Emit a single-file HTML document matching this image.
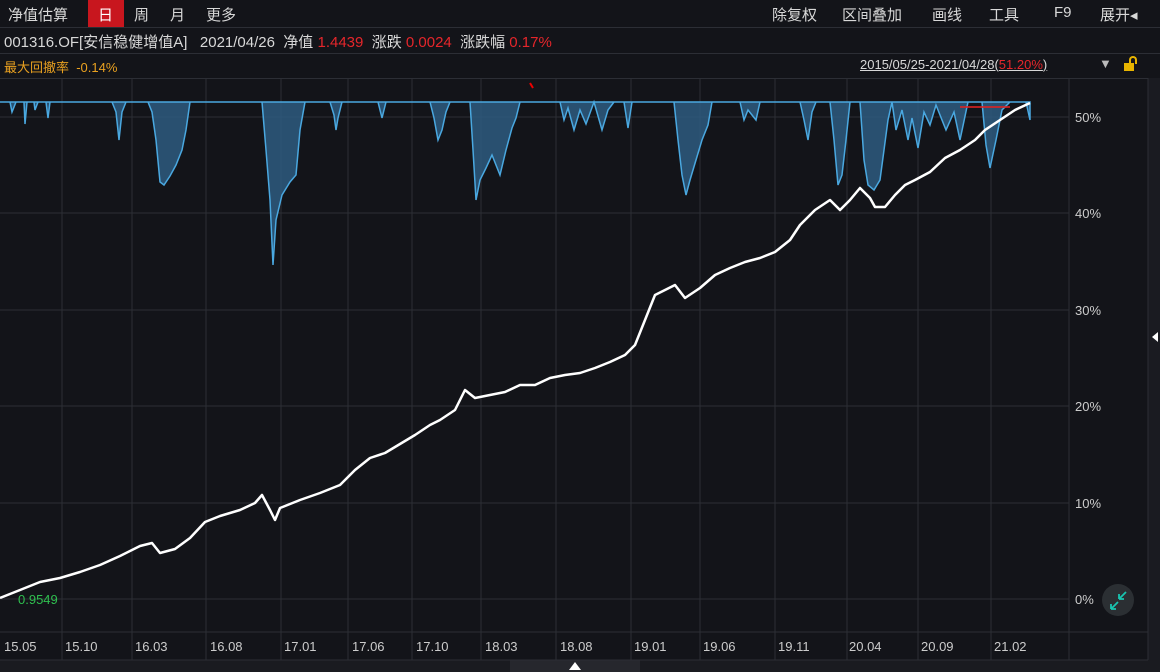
<!DOCTYPE html>
<html><head><meta charset="utf-8"><style>
*{margin:0;padding:0;box-sizing:border-box}
body{width:1160px;height:672px;background:#131419;overflow:hidden;position:relative;font-family:"Liberation Sans","Noto Sans CJK SC",sans-serif;color:#d8d8d8}
.t{position:absolute;white-space:nowrap;font-size:15px}
.r{color:#e5262b}
.line{position:absolute;background:#2c2e35}
</style></head><body>
<div class="line" style="left:0;top:27px;width:1160px;height:1px"></div>
<div class="line" style="left:0;top:53px;width:1160px;height:1px"></div>
<div class="line" style="left:0;top:78px;width:1160px;height:1px"></div>
<div style="position:absolute;left:88px;top:0;width:36px;height:27px;background:#c8161e"></div>
<div class="t" style="left:8px;top:4px">净值估算</div>
<div class="t" style="left:98px;top:4px;color:#fff">日</div>
<div class="t" style="left:134px;top:4px">周</div>
<div class="t" style="left:170px;top:4px">月</div>
<div class="t" style="left:206px;top:4px">更多</div>
<div class="t" style="left:772px;top:4px">除复权</div>
<div class="t" style="left:842px;top:4px">区间叠加</div>
<div class="t" style="left:932px;top:4px">画线</div>
<div class="t" style="left:989px;top:4px">工具</div>
<div class="t" style="left:1054px;top:4px">F9</div>
<div class="t" style="left:1100px;top:4px">展开◂</div>
<div class="t" style="left:4px;top:31px">001316.OF[安信稳健增值A]&nbsp;&nbsp; 2021/04/26 &nbsp;净值 <span class="r">1.4439</span> &nbsp;涨跌 <span class="r">0.0024</span> &nbsp;涨跌幅 <span class="r">0.17%</span></div>
<div class="t" style="left:4px;top:57px;font-size:13px;color:#e8a020">最大回撤率 &nbsp;-0.14%</div>
<div class="t" style="left:860px;top:57px;font-size:13px;text-decoration:underline">2015/05/25-2021/04/28(<span class="r">51.20%</span>)</div>
<div class="t" style="left:1099px;top:56px;font-size:13px;color:#bbb">▼</div>
<div style="position:absolute;left:1124px;top:63px;width:10px;height:8px;background:#e8b400"></div>
<div style="position:absolute;left:1129px;top:56px;width:8px;height:8px;border:2px solid #e8b400;border-bottom:none;border-radius:4px 4px 0 0"></div>
<svg style="position:absolute;left:0;top:0" width="1160" height="672">
<rect x="1148" y="78" width="12" height="594" fill="#1a1b21"/>
<rect x="0" y="660" width="1160" height="12" fill="#1a1b20"/>
<rect x="510" y="660" width="130" height="12" fill="#26272d"/>
<polygon points="569,670 575,662 581,670" fill="#fff"/>
<g stroke="#2c2e35" stroke-width="1">
<line x1="0" y1="117" x2="1069" y2="117"/><line x1="0" y1="213" x2="1069" y2="213"/><line x1="0" y1="310" x2="1069" y2="310"/><line x1="0" y1="406" x2="1069" y2="406"/><line x1="0" y1="503" x2="1069" y2="503"/><line x1="0" y1="599" x2="1069" y2="599"/>
<line x1="0" y1="632" x2="1148" y2="632"/><line x1="0" y1="660" x2="1148" y2="660"/>
<line x1="62" y1="78" x2="62" y2="660"/><line x1="132" y1="78" x2="132" y2="660"/><line x1="206" y1="78" x2="206" y2="660"/><line x1="281" y1="78" x2="281" y2="660"/><line x1="348" y1="78" x2="348" y2="660"/><line x1="412" y1="78" x2="412" y2="660"/><line x1="481" y1="78" x2="481" y2="660"/><line x1="556" y1="78" x2="556" y2="660"/><line x1="631" y1="78" x2="631" y2="660"/><line x1="700" y1="78" x2="700" y2="660"/><line x1="775" y1="78" x2="775" y2="660"/><line x1="847" y1="78" x2="847" y2="660"/><line x1="918" y1="78" x2="918" y2="660"/><line x1="991" y1="78" x2="991" y2="660"/><line x1="1069" y1="78" x2="1069" y2="660"/><line x1="1148" y1="78" x2="1148" y2="660"/>
</g>
<path d="M0,102 L10,102 12,112 16,102 24,102 25,124 27,102 34,102 35,110 38,102 46,102 48,118 50,102 112,102 116,112 119,140 122,112 126,102 148,102 152,112 156,140 160,182 164,185 170,176 176,165 182,150 186,130 190,102 262,102 266,150 270,200 273,265 276,220 282,195 290,182 296,175 300,130 305,102 330,102 334,115 336,130 338,118 342,102 378,102 382,118 386,102 430,102 434,118 438,140 442,130 446,112 450,102 470,102 473,150 476,200 480,180 486,168 492,155 500,175 506,150 512,128 516,118 520,102 560,102 564,120 568,108 574,130 580,110 586,124 594,102 602,130 608,110 614,102 624,102 628,128 632,102 674,102 678,140 682,175 686,195 690,180 696,160 702,140 708,125 712,102 740,102 744,120 748,110 756,120 760,102 800,102 804,120 808,140 812,112 816,102 830,102 834,140 838,185 842,175 846,140 850,102 860,102 864,160 868,185 874,190 880,180 884,150 888,120 892,102 896,130 902,110 908,140 912,118 918,148 924,112 930,125 936,105 946,130 954,112 960,140 968,102 982,102 986,145 990,168 996,140 1002,110 1010,102 1026,102 1030,120 1030,102 Z" fill="#2e5a80" fill-opacity="0.85" stroke="#4aa8e0" stroke-width="1.5"/>
<line x1="960" y1="107" x2="1010" y2="107" stroke="#d22" stroke-width="2" opacity="0.8"/>
<path d="M530,83 L533,88" stroke="#e00" stroke-width="2"/>
<polyline fill="none" stroke="#fff" stroke-width="2.5" stroke-linejoin="round" points="0,598 20,590 40,582 60,578 80,572 100,565 120,556 140,546 152,543 160,553 175,549 190,538 205,522 220,516 240,510 255,503 262,495 270,510 275,520 280,508 300,500 320,493 340,485 355,470 370,458 385,453 400,444 415,435 430,425 440,420 455,410 465,390 475,398 490,395 505,392 520,385 535,385 550,378 565,375 580,373 595,368 610,362 625,355 635,345 645,320 655,295 665,290 675,285 685,298 700,288 715,275 730,268 745,262 760,258 775,252 790,240 800,225 815,210 830,200 840,210 850,200 860,188 870,198 875,207 885,207 895,195 905,185 915,180 930,172 945,158 960,150 975,140 985,130 1000,120 1015,110 1030,103"/>
<circle cx="1118" cy="600" r="16" fill="#2b2f33"/>
<path d="M1111,609 L1118,602 M1111,609 v-5 M1111,609 h5 M1126,592 L1119,599 M1119,599 v-5 M1119,599 h5" stroke="#19c4b0" stroke-width="1.8" fill="none"/>
<g font-size="13" fill="#ccc" font-family="Liberation Sans,sans-serif">
<text x="1075" y="122">50%</text><text x="1075" y="218">40%</text><text x="1075" y="315">30%</text><text x="1075" y="411">20%</text><text x="1075" y="508">10%</text><text x="1075" y="604">0%</text>
<text x="18" y="604" fill="#2fbf4f">0.9549</text>
<text x="4" y="651">15.05</text><text x="65" y="651">15.10</text><text x="135" y="651">16.03</text><text x="210" y="651">16.08</text><text x="284" y="651">17.01</text><text x="352" y="651">17.06</text><text x="416" y="651">17.10</text><text x="485" y="651">18.03</text><text x="560" y="651">18.08</text><text x="634" y="651">19.01</text><text x="703" y="651">19.06</text><text x="778" y="651">19.11</text><text x="849" y="651">20.04</text><text x="921" y="651">20.09</text><text x="994" y="651">21.02</text>
</g>
<polygon points="1152,337 1158,332 1158,342" fill="#fff"/>
</svg>
</body></html>
